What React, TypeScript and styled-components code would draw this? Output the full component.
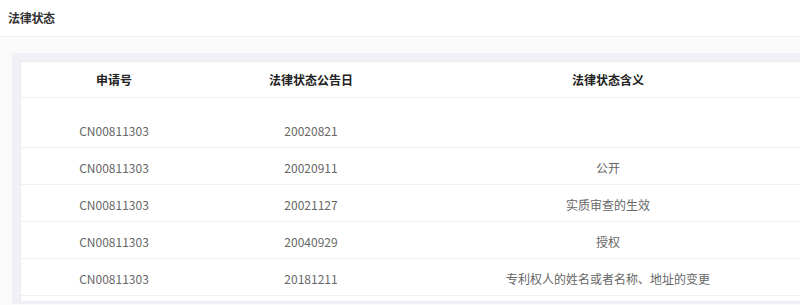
import React from "react";
import styled, { createGlobalStyle } from "styled-components";

const Global = createGlobalStyle`
  html, body { margin: 0; padding: 0; background: #fafafb; }
  body { font-family: "Noto Sans CJK SC", "Noto Sans", sans-serif; overflow: hidden; }
`;

const Page = styled.div`
  width: 800px;
  height: 305px;
  overflow: hidden;
  background: #fafafb;
`;

const TopBar = styled.div`
  height: 37px;
  background: #ffffff;
  border-bottom: 1px solid #f0f0f2;
  box-sizing: border-box;
  display: flex;
  align-items: center;
  padding-left: 8px;
  padding-bottom: 1px;
`;

const Title = styled.div`
  font-size: 12px;
  font-weight: 700;
  color: #333;
  letter-spacing: -0.3px;
`;

const Body = styled.div`
  padding: 16px 0 0 12px;
`;

const Panel = styled.div`
  background: #f0f1f6;
  padding: 8px 0 2px 8px;
  width: 820px;
`;

const Table = styled.div`
  background: #ffffff;
  border: 1px solid #ebedf1;
  border-right: none;
  padding-bottom: 5px;
`;

const Row = styled.div<{ $first?: boolean; $head?: boolean }>`
  display: grid;
  grid-template-columns: 186px 208px 386px;
  height: ${(p) => (p.$head ? 36 : p.$first ? 50 : 37)}px;
  box-sizing: border-box;
  border-bottom: 1px solid #f0f1f4;
  padding-top: ${(p) => (p.$first ? 13 : 0)}px;
`;

const Cell = styled.div<{ $head?: boolean }>`
  display: flex;
  align-items: center;
  justify-content: center;
  font-size: 12px;
  font-weight: ${(p) => (p.$head ? 700 : 400)};
  color: ${(p) => (p.$head ? "#222" : "#666")};
  padding-top: ${(p) => (p.$head ? 0 : 2)}px;
`;

const rows = [
  ["CN00811303", "20020821", ""],
  ["CN00811303", "20020911", "公开"],
  ["CN00811303", "20021127", "实质审查的生效"],
  ["CN00811303", "20040929", "授权"],
  ["CN00811303", "20181211", "专利权人的姓名或者名称、地址的变更"],
];

export default function App() {
  return (
    <Page>
      <Global />
      <TopBar>
        <Title>法律状态</Title>
      </TopBar>
      <Body>
        <Panel>
          <Table>
            <Row $head>
              <Cell $head>申请号</Cell>
              <Cell $head>法律状态公告日</Cell>
              <Cell $head>法律状态含义</Cell>
            </Row>
            {rows.map((r, i) => (
              <Row key={i} $first={i === 0}>
                {r.map((c, j) => (
                  <Cell key={j}>{c}</Cell>
                ))}
              </Row>
            ))}
          </Table>
        </Panel>
      </Body>
    </Page>
  );
}
